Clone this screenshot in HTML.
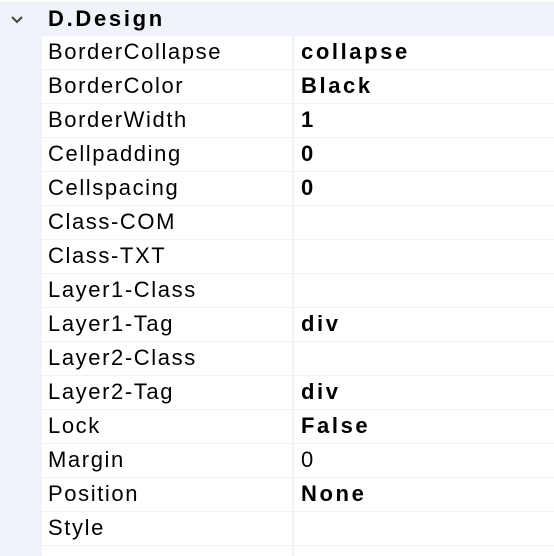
<!DOCTYPE html>
<html><head><style>
body{margin:0;width:554px;height:544px;overflow:hidden;background:#fff;font-family:"Liberation Sans","NanumGothic",sans-serif;}
.top{height:2px;background:#fff;border-bottom:1px solid #eef1f7;}
.cat{position:absolute;top:3px;left:0;width:554px;height:33px;background:#f0f3f9;}
.cat span{position:absolute;left:48px;top:3px;font-size:22px;font-weight:bold;color:#000;letter-spacing:2.7px;}
.cat svg{position:absolute;left:10px;top:12px;}
.margin{position:absolute;left:0;top:36px;width:42px;height:520px;background:#f0f3f9;}
.row{position:absolute;left:42px;width:512px;height:33px;border-bottom:1px solid #eef2f8;}
.row .n{position:absolute;left:6px;top:3px;font-size:22px;color:#000;letter-spacing:1.6px;}
.row .v{position:absolute;left:259px;top:3px;font-size:22px;color:#000;letter-spacing:1.6px;}
.row .b{font-weight:bold;letter-spacing:2.6px;}
.split{position:absolute;left:292px;top:36px;width:2px;height:520px;background:#eef2f8;}
</style></head><body>
<div class="top"></div>
<div class="cat"><svg width="14" height="10"><path d="M2 2 L7 7 L12 2" stroke="#444" stroke-width="2" fill="none"/></svg><span>D.Design</span></div>
<div class="margin"></div>
<div class="split"></div>
<div class="row" style="top:36px"><span class="n">BorderCollapse</span><span class="v b">collapse</span></div>
<div class="row" style="top:70px"><span class="n">BorderColor</span><span class="v b">Black</span></div>
<div class="row" style="top:104px"><span class="n">BorderWidth</span><span class="v b">1</span></div>
<div class="row" style="top:138px"><span class="n">Cellpadding</span><span class="v b">0</span></div>
<div class="row" style="top:172px"><span class="n">Cellspacing</span><span class="v b">0</span></div>
<div class="row" style="top:206px"><span class="n">Class-COM</span></div>
<div class="row" style="top:240px"><span class="n">Class-TXT</span></div>
<div class="row" style="top:274px"><span class="n">Layer1-Class</span></div>
<div class="row" style="top:308px"><span class="n">Layer1-Tag</span><span class="v b">div</span></div>
<div class="row" style="top:342px"><span class="n">Layer2-Class</span></div>
<div class="row" style="top:376px"><span class="n">Layer2-Tag</span><span class="v b">div</span></div>
<div class="row" style="top:410px"><span class="n">Lock</span><span class="v b">False</span></div>
<div class="row" style="top:444px"><span class="n">Margin</span><span class="v">0</span></div>
<div class="row" style="top:478px"><span class="n">Position</span><span class="v b">None</span></div>
<div class="row" style="top:512px"><span class="n">Style</span></div>
</body></html>
